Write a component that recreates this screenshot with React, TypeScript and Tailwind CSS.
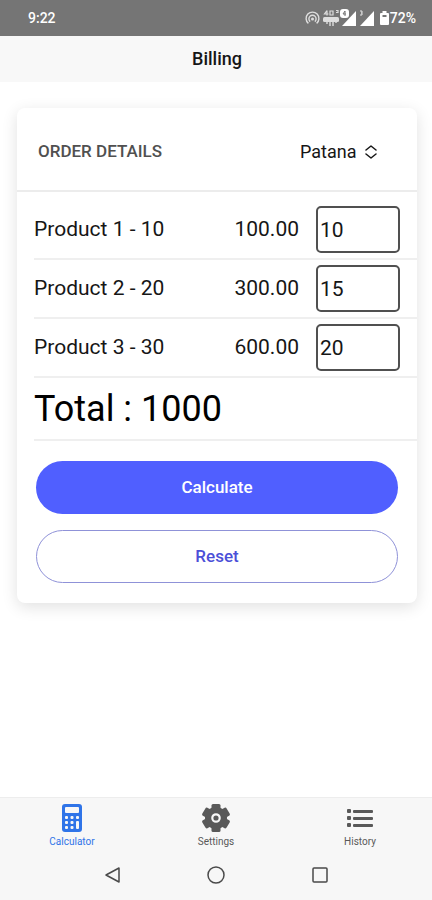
import { useState } from "react";

const products = [
  { id: 1, name: "Product 1", price: 10, quantity: "10" },
  { id: 2, name: "Product 2", price: 20, quantity: "15" },
  { id: 3, name: "Product 3", price: 30, quantity: "20" },
];

const StatusBar = () => {
  return (
    <div className="flex h-9 items-center justify-between bg-[#757575] pr-4 pl-7 text-sm font-medium text-white">
      <span>9:22</span>
      <div className="flex items-center gap-1">
        <svg width="70" height="18" viewBox="0 0 70 18" fill="none">
          {/* Hotspot */}
          <path
            d="M3.4 14.4a6.4 6.4 0 1 1 8.2 0M5.2 12.6a3.6 3.6 0 1 1 4.6 0"
            stroke="#dedede"
            strokeWidth="1.4"
          />
          <circle cx="7.5" cy="10" r="1.5" fill="#dedede" />
          {/* Network speed */}
          <path
            d="M22 1.5l-2.5 3.5h4M22 1.5v5M25 2h3v4h-3zM31 1.5h2v2h-2"
            stroke="#dedede"
            strokeWidth="1.2"
          />
          <rect x="18" y="8" width="16" height="5" rx="1.5" fill="#dedede" />
          <path d="M22 12v3M25 12v5M28 12v5M31 12v2" stroke="#dedede" strokeWidth="1.4" />
          {/* SIM signals */}
          <path d="M51 2v15H37z" fill="#fff" />
          <rect x="35" y="0" width="9" height="9" rx="3" fill="#fff" />
          <path d="M40 2l-2 3h3M40 2v5" stroke="#757575" />
          <path d="M69 2v15H55z" fill="#fff" />
          <path d="M55 2h2v2h-1M57 4v2h-2" stroke="#e4e4e4" />
        </svg>
        <div className="flex items-center">
          <svg width="11" height="16" viewBox="0 0 11 16">
            <path
              d="M3.5 1h4v2H9q1 0 1 1v10q0 1-1 1H2q-1 0-1-1V4q0-1 1-1h1.5z"
              fill="#fff"
            />
            <path d="M3.5 5h4v2h-4z" fill="#757575" />
          </svg>
          <span>72%</span>
        </div>
      </div>
    </div>
  );
};

const CalculatorIcon = () => (
  <svg width="28" height="28" viewBox="0 0 28 28">
    <rect x="4" y="0" width="20" height="28" rx="3" fill="currentColor" />
    <rect x="7" y="3" width="14" height="6" rx="1" fill="#f7f7f7" />
    <g fill="#f7f7f7">
      <rect x="7" y="12" width="3" height="3" rx="1" />
      <rect x="12.5" y="12" width="3" height="3" rx="1" />
      <rect x="18" y="12" width="3" height="3" rx="1" />
      <rect x="7" y="17" width="3" height="3" rx="1" />
      <rect x="12.5" y="17" width="3" height="3" rx="1" />
      <rect x="7" y="22" width="3" height="3" rx="1" />
      <rect x="12.5" y="22" width="3" height="3" rx="1" />
      <rect x="18" y="17" width="3" height="8" rx="1" />
    </g>
  </svg>
);

const SettingsIcon = () => (
  <svg width="28" height="28" viewBox="0 0 28 28">
    <g fill="currentColor">
      <circle cx="14" cy="14" r="11" />
      <rect x="9.5" y="0" width="9" height="28" rx="1.5" />
      <rect x="9.5" y="0" width="9" height="28" rx="1.5" transform="rotate(60 14 14)" />
      <rect x="9.5" y="0" width="9" height="28" rx="1.5" transform="rotate(120 14 14)" />
    </g>
    <circle cx="14" cy="14" r="3.7" fill="currentColor" stroke="#f7f7f7" strokeWidth="2.2" />
  </svg>
);

const ListIcon = () => (
  <svg width="28" height="28" viewBox="0 0 28 28" fill="currentColor">
    <rect x="1" y="5" width="4" height="4" rx="1" />
    <rect x="7" y="6" width="20" height="3" rx="1" />
    <rect x="1" y="12" width="4" height="4" rx="1" />
    <rect x="7" y="13" width="20" height="3" rx="1" />
    <rect x="1" y="19" width="4" height="4" rx="1" />
    <rect x="7" y="20" width="20" height="3" rx="1" />
  </svg>
);

const TabBar = () => {
  return (
    <nav className="grid grid-cols-3 pt-1.5 text-[10px] leading-3 text-[#595959]">
      <a href="#calculator" className="flex flex-col items-center gap-1 text-[#2f74e8]">
        <CalculatorIcon />
        Calculator
      </a>
      <a href="#settings" className="flex flex-col items-center gap-1">
        <SettingsIcon />
        Settings
      </a>
      <a href="#history" className="flex flex-col items-center gap-1">
        <ListIcon />
        History
      </a>
    </nav>
  );
};

const SystemNav = () => {
  return (
    <div className="flex h-[52px] items-center justify-center gap-20 pt-0.5 text-[#4a4a4a]">
      <button aria-label="Back">
        <svg width="24" height="24" viewBox="0 0 24 24" fill="none" stroke="currentColor" strokeWidth="1.5">
          <path d="M19 5v14L6 12z" strokeLinejoin="round" />
        </svg>
      </button>
      <button aria-label="Home">
        <svg width="24" height="24" viewBox="0 0 24 24" fill="none" stroke="currentColor" strokeWidth="1.5">
          <circle cx="12" cy="12" r="8" />
        </svg>
      </button>
      <button aria-label="Recent apps">
        <svg width="24" height="24" viewBox="0 0 24 24" fill="none" stroke="currentColor" strokeWidth="1.5">
          <rect x="5" y="5" width="14" height="14" rx="1" />
        </svg>
      </button>
    </div>
  );
};

export default function App() {
  const [quantities, setQuantities] = useState(products.map((p) => p.quantity));
  const [total, setTotal] = useState(1000);
  const amounts = products.map((p, i) => p.price * Number(quantities[i]));

  const handleChange = (index: number, value: string) => {
    setQuantities(quantities.map((q, i) => (i === index ? value : q)));
  };

  const handleReset = () => {
    setQuantities(products.map(() => ""));
    setTotal(0);
  };

  return (
    <div className="flex min-h-screen flex-col bg-white font-[Roboto,sans-serif] text-[#161616]">
      <StatusBar />

      <header className="flex h-[46px] items-center justify-center bg-[#f8f8f8] pl-0.5">
        <h1 className="text-lg font-medium">Billing</h1>
      </header>

      <main className="flex-1 py-[26px] pr-[15px] pl-[17px]">
        <div className="rounded-lg bg-white shadow-[0_4px_16px_rgba(0,0,0,0.12)]">
          {/* Card Header */}
          <div className="flex h-[84px] items-center justify-between border-b-2 border-[#ececec] pt-1.5 pr-10 pl-[21px]">
            <h2 className="text-[17px] font-medium text-[#505050]">ORDER DETAILS</h2>
            <div className="flex items-center gap-2">
              <select aria-label="Customer" className="appearance-none bg-transparent text-lg">
                <option>Patana</option>
              </select>
              <svg width="12" height="16" viewBox="0 0 12 16" fill="none" stroke="currentColor" strokeWidth="1.5">
                <path d="M1 6l5-4 5 4M1 10l5 4 5-4" strokeLinecap="round" strokeLinejoin="round" />
              </svg>
            </div>
          </div>

          {/* Products */}
          <ul className="pt-[9px] pl-[17px] text-[21px]">
            {products.map((product, i) => (
              <li
                key={product.id}
                className="flex h-[59px] items-center border-b-2 border-[#efefef] pr-[17px]"
              >
                <label htmlFor={`product-${product.id}`} className="flex-1">
                  {product.name} - {product.price}
                </label>
                <span className="mr-[17px]">{amounts[i].toFixed(2)}</span>
                <input
                  id={`product-${product.id}`}
                  type="text"
                  inputMode="numeric"
                  value={quantities[i]}
                  onChange={(e) => handleChange(i, e.target.value)}
                  className="h-[47px] w-[84px] rounded-[5px] border-2 border-[#505050] px-0.5"
                />
              </li>
            ))}
            <li className="flex h-[63px] items-center border-b-2 border-[#efefef] text-4xl text-black">
              Total : {total}
            </li>
          </ul>

          {/* Actions */}
          <div className="flex flex-col gap-4 px-[19px] py-5 text-[17px] font-medium">
            <button
              onClick={() => setTotal(amounts.reduce((sum, a) => sum + a, 0))}
              className="h-[53px] rounded-full bg-[#505fff] text-white"
            >
              Calculate
            </button>
            <button
              onClick={handleReset}
              className="h-[53px] rounded-full border border-[#8f92d8] text-[#4b50d8]"
            >
              Reset
            </button>
          </div>
        </div>
      </main>

      <footer className="border-t border-[#ededed] bg-[#f7f7f7]">
        <TabBar />
        <SystemNav />
      </footer>
    </div>
  );
}
